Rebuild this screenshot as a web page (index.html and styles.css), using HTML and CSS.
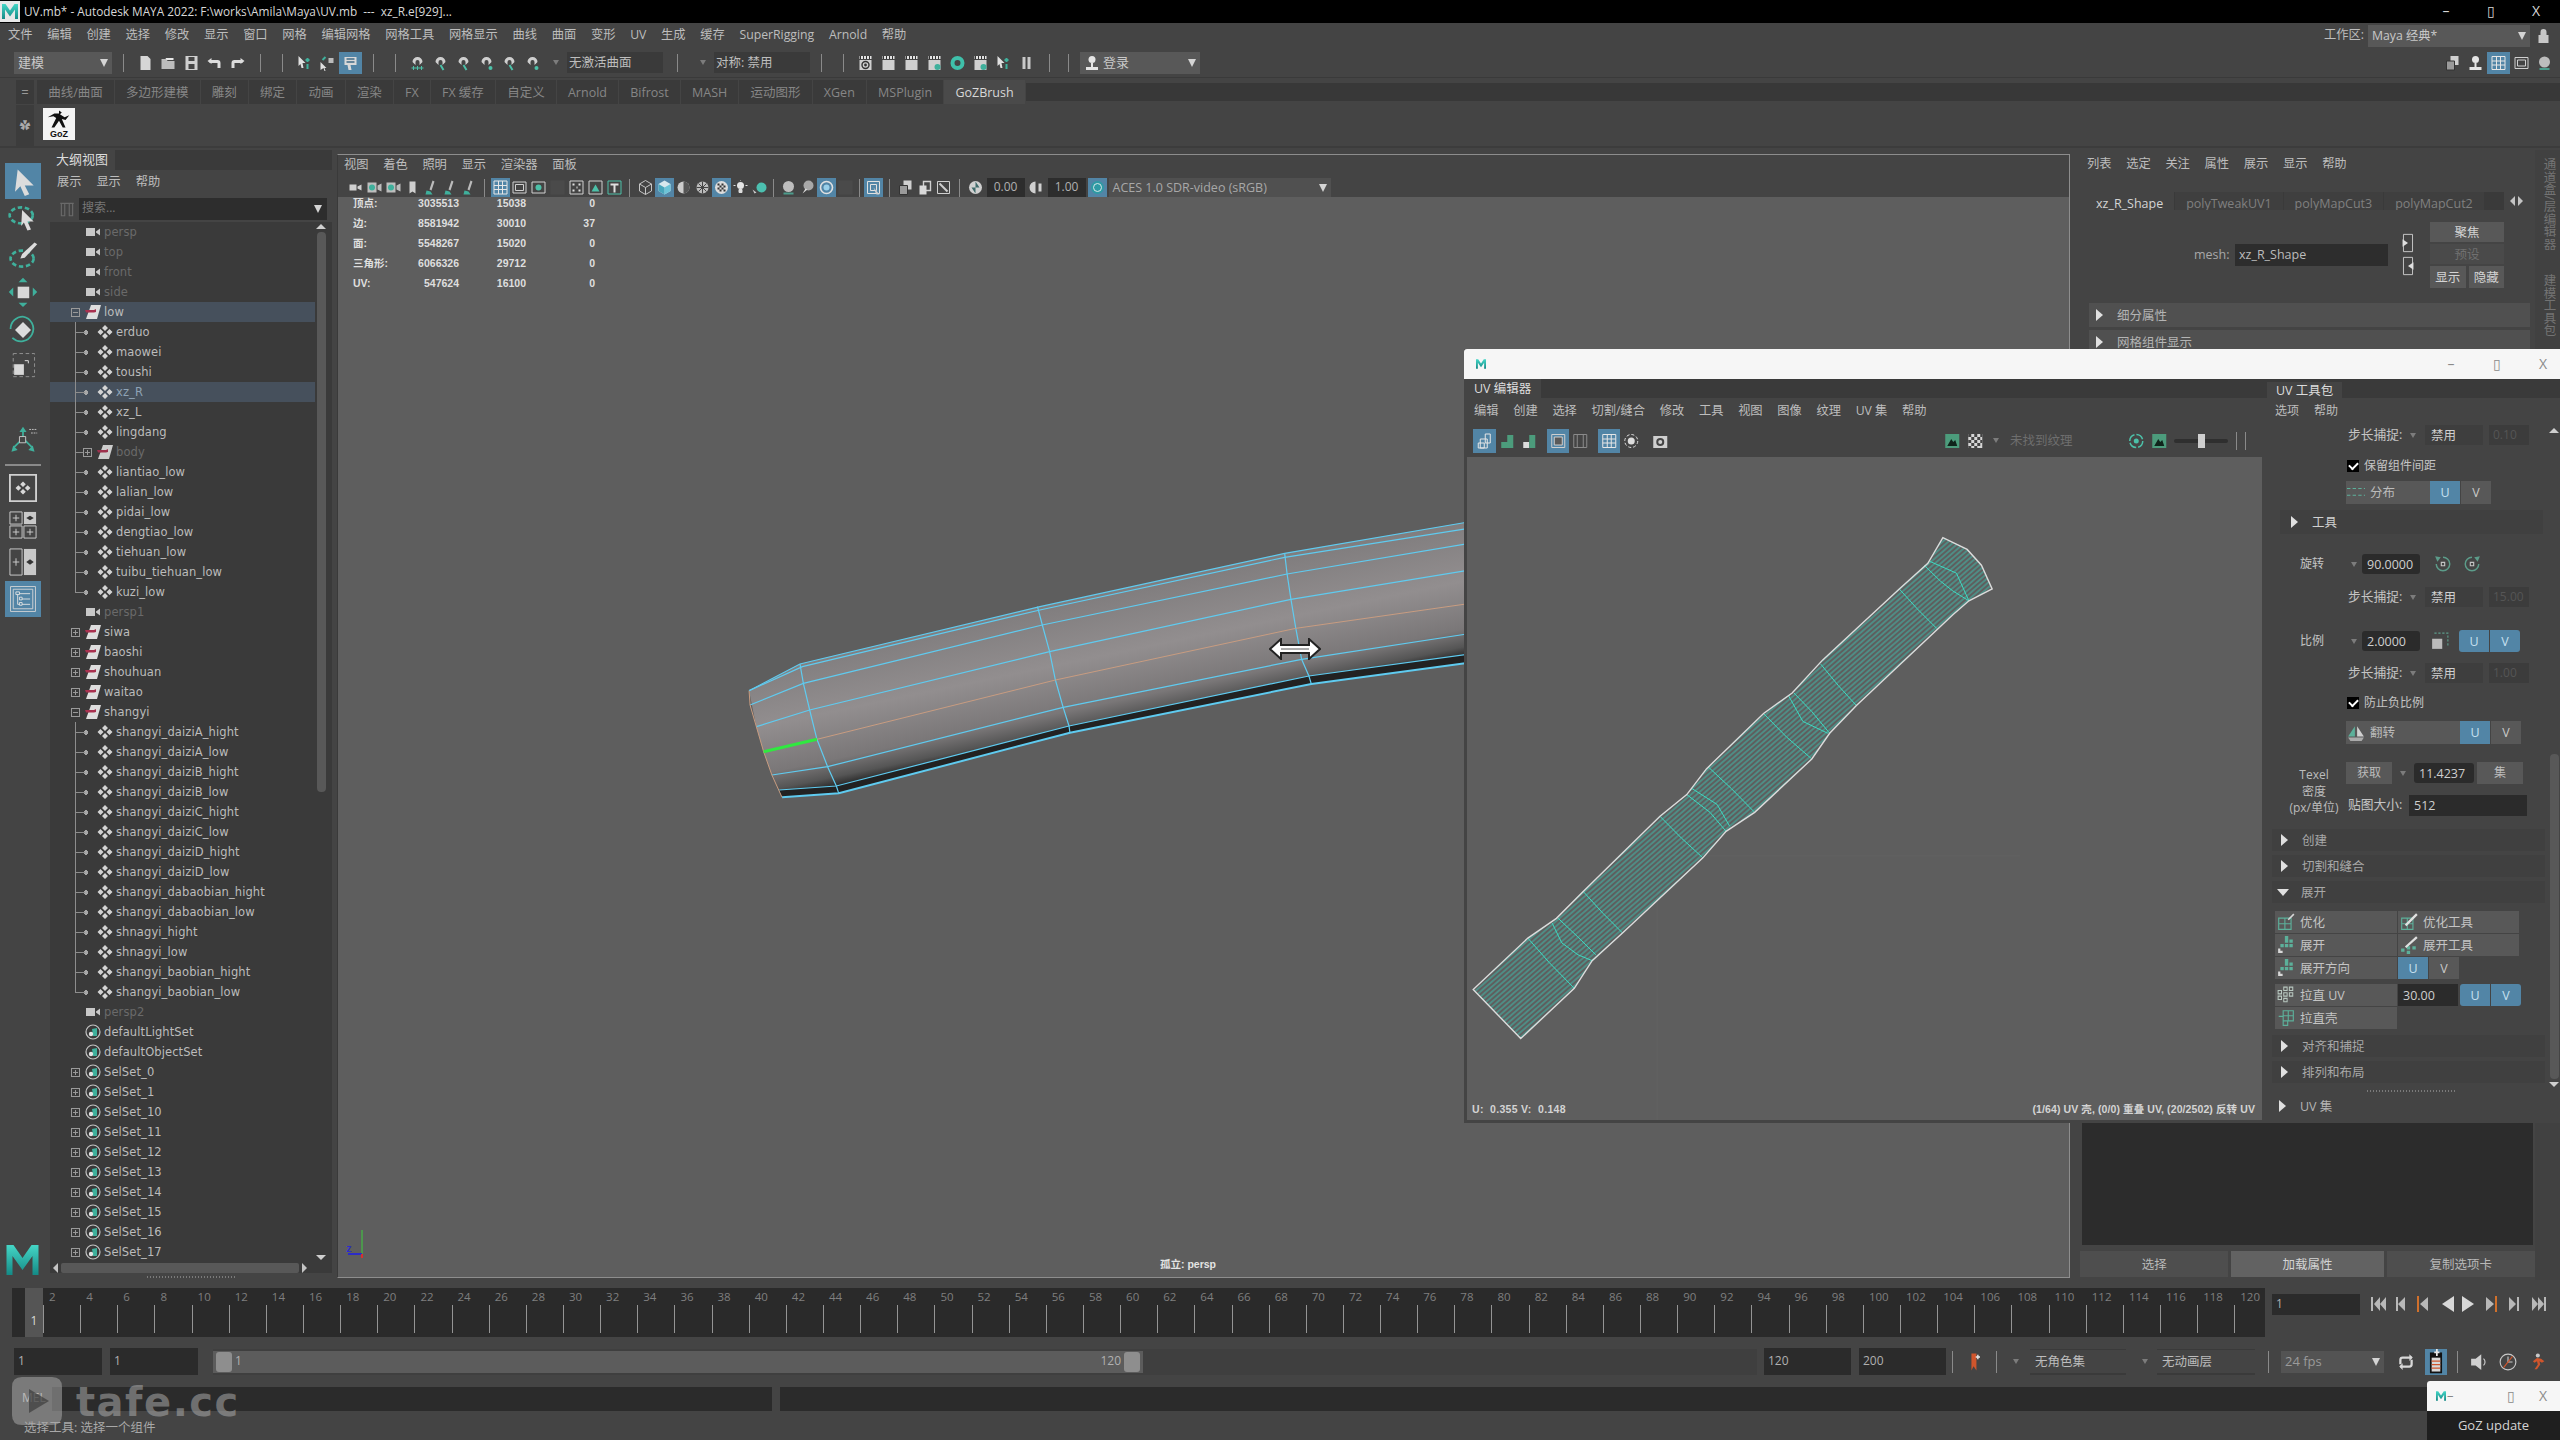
FILE: index.html
```html
<!DOCTYPE html>
<html lang="zh">
<head>
<meta charset="utf-8">
<title>Maya UV</title>
<link rel="stylesheet" href="styles.css">
</head>
<body>
<svg class="sprite" aria-hidden="true"><defs>
<linearGradient id="mg" x1="0" y1="0" x2="0" y2="1"><stop offset="0" stop-color="#45d6c6"/><stop offset="1" stop-color="#148a86"/></linearGradient>
<symbol id="mlogo" viewBox="0 0 32 30"><path d="M0 0h7l9 13 9-13h7v30h-6V11l-10 14L6 11v19H0z" fill="url(#mg)"/></symbol>
<symbol id="cam" viewBox="0 0 16 16"><path d="M1 4h9v8H1zM11 7.5l4-3v7l-4-3z" fill="#d8d8d8"/></symbol>
<symbol id="grp" viewBox="0 0 16 16"><path d="M6 1h10l-4 14H1z" fill="#dedede"/><path d="M0 6h9l2-1v3l-2 0.5H1z" fill="#a8304f"/></symbol>
<symbol id="mesh" viewBox="0 0 16 16"><path d="M8 1l3 3-3 3-3-3zM3.5 5l3 3-3 3-3-3zM12.500 5l3 3-3 3-3-3zM8 9l3 3-3 3-3-3z" fill="#d4d4d4"/></symbol>
<symbol id="set" viewBox="0 0 16 16"><circle cx="8" cy="8" r="7" fill="none" stroke="#c4c4c4" stroke-width="1.2"/><path d="M7 5l5-1v8H8z" fill="#3fb09c"/><circle cx="6" cy="10" r="2.200" fill="#e4e4e4"/></symbol>
<symbol id="plus" viewBox="0 0 9 9"><rect x=".5" y=".5" width="8" height="8" fill="none" stroke="#9a9a9a"/><path d="M2 4.500h5M4.500 2v5" stroke="#9a9a9a"/></symbol>
<symbol id="minus" viewBox="0 0 9 9"><rect x=".5" y=".5" width="8" height="8" fill="none" stroke="#9a9a9a"/><path d="M2 4.500h5" stroke="#9a9a9a"/></symbol>
<symbol id="new" viewBox="0 0 16 16"><path d="M3 1h7l3 3v11H3z" fill="#d6d6d6"/></symbol>
<symbol id="open" viewBox="0 0 16 16"><path d="M1 4h5l1 2h7v8H1z" fill="#bdbdbd"/><path d="M5 3l8 0 0 2H6z" fill="#e8e8e8"/></symbol>
<symbol id="save" viewBox="0 0 16 16"><path d="M2 1h12v14H2z" fill="#cfcfcf"/><path d="M5 2h6v4H5zM5 9h6v5H5z" fill="#444"/></symbol>
<symbol id="undo" viewBox="0 0 16 16"><path d="M3 8V5h8c2 0 3 1 3 3v5h-3V8z" fill="#dcdcdc"/><path d="M1 6l4-3v6z" fill="#dcdcdc"/></symbol>
<symbol id="redo" viewBox="0 0 16 16"><path d="M13 8V5H5C3 5 2 6 2 8v5h3V8z" fill="#dcdcdc"/><path d="M15 6l-4-3v6z" fill="#dcdcdc"/></symbol>
<symbol id="arrow" viewBox="0 0 16 16"><path d="M4 1l9 9H9l2 5-2 1-2-5-3 3z" fill="#d6d6d6"/></symbol>
<symbol id="selh" viewBox="0 0 16 16"><path d="M2 1l7 7H6l1 5-2 0-1-4-2 2z" fill="#e0e0e0"/><path d="M11 3v4M9 5h4M11 9v5" stroke="#3fb09c" stroke-width="2"/></symbol>
<symbol id="selc" viewBox="0 0 16 16"><path d="M9 3h5v5H9z" fill="#bbb"/><path d="M1 7l6 6H5l1 3-1 0-1-3-3 2z" fill="#e0e0e0"/><path d="M3 5l3-3" stroke="#3fb09c" stroke-width="2"/></symbol>
<symbol id="seld" viewBox="0 0 16 16"><rect x="1" y="0" width="14" height="16" fill="none"/><path d="M2 2h12v8H8l1 5H6l-1-5H2z" fill="#d8d8d8"/><path d="M4 4h8M4 7h8" stroke="#3f6a85" stroke-width="1.400"/></symbol>
<symbol id="snapg" viewBox="0 0 16 16"><path d="M3 7a5 5 0 1 1 10 0l-3 3V7a2 2 0 1 0-4 0v3z" fill="#cfcfcf"/><path d="M4 11v4M8 11v4M12 11v4M2 13h12" stroke="#4cc0a8"/></symbol>
<symbol id="snapm" viewBox="0 0 16 16"><path d="M3 7a5 5 0 1 1 10 0l-3 3V7a2 2 0 1 0-4 0v3z" fill="#cfcfcf"/><path d="M8 10l3 5" stroke="#4cc0a8" stroke-width="2"/></symbol>
<symbol id="snapp" viewBox="0 0 16 16"><path d="M3 7a5 5 0 1 1 10 0l-3 3V7a2 2 0 1 0-4 0v3z" fill="#cfcfcf"/><circle cx="12" cy="13" r="2" fill="#4cc0a8"/></symbol>
<symbol id="clap" viewBox="0 0 16 16"><path d="M2 1h12v3H2z" fill="#e2e2e2"/><path d="M3 1v3M6 1v3M9 1v3M12 1v3" stroke="#333"/><path d="M2 5h12v10H2z" fill="#cfcfcf"/></symbol>
<symbol id="clapo" viewBox="0 0 16 16"><use href="#clap"/><circle cx="8" cy="10" r="3.500" fill="none" stroke="#333" stroke-width="1.400"/><circle cx="8" cy="10" r="1.400" fill="#333"/></symbol>
<symbol id="clapt" viewBox="0 0 16 16"><use href="#clap"/><circle cx="11" cy="12" r="3" fill="#3fb09c"/></symbol>
<symbol id="ring" viewBox="0 0 16 16"><circle cx="8" cy="8" r="5" fill="none" stroke="#3fc0aa" stroke-width="4"/></symbol>
<symbol id="pause" viewBox="0 0 16 16"><path d="M4 2h3v12H4zM9 2h3v12H9z" fill="#c8c8c8"/></symbol>
<symbol id="person" viewBox="0 0 16 16"><circle cx="8" cy="4.500" r="3.500" fill="#e4e4e4"/><path d="M7 8h2v4h5v3H2v-3h5z" fill="#e4e4e4"/></symbol>
<symbol id="vcam" viewBox="0 0 16 16"><path d="M2 5h7v6H2zM10 7l4-2v6l-4-2z" fill="#cfcfcf"/></symbol>
<symbol id="vcam2" viewBox="0 0 16 16"><path d="M1 3h9v10H1zM11 6l4-2v8l-4-2z" fill="#bdbdbd"/><circle cx="5.500" cy="8" r="3" fill="#3fb09c"/></symbol>
<symbol id="book" viewBox="0 0 16 16"><path d="M5 2h6v12l-3-2-3 2z" fill="#cfcfcf"/></symbol>
<symbol id="tool" viewBox="0 0 16 16"><path d="M9 1l2 1-3 9-2-1z" fill="#bbb"/><path d="M3 11l4 1 2 3H2z" fill="#3fb09c"/></symbol>
<symbol id="gridb" viewBox="0 0 16 16"><path d="M1.500 1.500h13v13h-13zM1.500 6h13M1.500 10h13M6 1.500v13M10 1.500v13" fill="none" stroke="#e6e6e6"/></symbol>
<symbol id="frame" viewBox="0 0 16 16"><path d="M1.500 2.500h13v11h-13zM4 5h8v6H4z" fill="none" stroke="#d0d0d0"/></symbol>
<symbol id="fdot" viewBox="0 0 16 16"><path d="M1.500 2.500h13v11h-13z" fill="none" stroke="#d0d0d0"/><circle cx="8" cy="8" r="3" fill="#4cc0a8"/></symbol>
<symbol id="fdark" viewBox="0 0 16 16"><path d="M1 1h14v14H1z" fill="#4a4a4a"/></symbol>
<symbol id="fsafe" viewBox="0 0 16 16"><path d="M1.500 1.500h13v13h-13z" fill="none" stroke="#d0d0d0"/><path d="M4 5h2M10 5h2M4 11h2M10 11h2M8 8h1" stroke="#e0e0e0" stroke-width="2"/></symbol>
<symbol id="fmt" viewBox="0 0 16 16"><path d="M1.500 1.500h13v13h-13z" fill="none" stroke="#d0d0d0"/><path d="M4 12l4-7 4 7z" fill="#4cc0a8"/></symbol>
<symbol id="ft" viewBox="0 0 16 16"><path d="M1.500 1.500h13v13h-13z" fill="none" stroke="#4cc0a8"/><path d="M4 4h8v2H9v7H7V6H4z" fill="#e0e0e0"/></symbol>
<symbol id="cubew" viewBox="0 0 16 16"><path d="M8 1l6 3.500v7L8 15l-6-3.500v-7zM8 8l6-3.500M8 8v7M8 8L2 4.500" fill="none" stroke="#c6c6c6"/></symbol>
<symbol id="cubes" viewBox="0 0 16 16"><path d="M8 1l6 3.500v7L8 15l-6-3.500v-7z" fill="#d8e8ee"/><path d="M8 8l6-3.500v7L8 15z" fill="#6cc4d8"/><path d="M8 8v7l-6-3.500v-7z" fill="#48a6bc"/></symbol>
<symbol id="ballt" viewBox="0 0 16 16"><circle cx="8" cy="8" r="6" fill="#ccc"/><path d="M8 2a6 6 0 0 1 0 12z" fill="#555"/></symbol>
<symbol id="ballg" viewBox="0 0 16 16"><circle cx="8" cy="8" r="6" fill="#bbb"/><path d="M2 8h12M8 2v12M4 4l8 8M12 4l-8 8" stroke="#444"/></symbol>
<symbol id="ballc" viewBox="0 0 16 16"><circle cx="8" cy="8" r="6.500" fill="#ddd"/><path d="M4 4h2v2H4zM8 4h2v2H8zM6 6h2v2H6zM10 6h2v2h-2zM4 8h2v2H4zM8 8h2v2H8zM6 10h2v2H6zM10 10h2v2h-2z" fill="#333"/></symbol>
<symbol id="bulb" viewBox="0 0 16 16"><circle cx="8" cy="6" r="3.500" fill="#e4e4e4"/><path d="M6.500 10h3v3h-3zM1 6h2M13 6h2M8 0v1" fill="#ddd" stroke="#ddd"/></symbol>
<symbol id="tball" viewBox="0 0 16 16"><circle cx="10" cy="8" r="5" fill="#4cc0b0"/><path d="M1 10l4 3-2 1z" fill="#ccc"/></symbol>
<symbol id="ballw" viewBox="0 0 16 16"><circle cx="8" cy="7" r="5.500" fill="#bdbdbd"/><path d="M3 13h10v2H3z" fill="#4c9c8c"/></symbol>
<symbol id="balla" viewBox="0 0 16 16"><circle cx="9" cy="6" r="5" fill="#a8a8a8"/><path d="M3 14l3-5 2 1z" fill="#d8d8d8"/></symbol>
<symbol id="balln" viewBox="0 0 16 16"><circle cx="8" cy="8" r="6" fill="none" stroke="#e0e0e0" stroke-width="1.600"/><circle cx="8" cy="8" r="3" fill="#9ad0ea"/></symbol>
<symbol id="lock2" viewBox="0 0 16 16"><path d="M2 2h12v12H2z" fill="none" stroke="#e0e0e0"/><path d="M5 5h6v6H5z" fill="none" stroke="#e0e0e0"/><path d="M8 8l6 7-3 0-1-2z" fill="#d0d0d0"/></symbol>
<symbol id="copy" viewBox="0 0 16 16"><path d="M6 1h8v9H6z" fill="#d0d0d0"/><path d="M2 6h8v9H2z" fill="#9a9a9a" stroke="#333"/></symbol>
<symbol id="copy2" viewBox="0 0 16 16"><path d="M7 2h7v9H7z" fill="none" stroke="#d0d0d0" stroke-width="1.400"/><path d="M3 6h7v9H3z" fill="#d8d8d8"/></symbol>
<symbol id="edit" viewBox="0 0 16 16"><path d="M2 2h12v12H2z" fill="none" stroke="#cfcfcf"/><path d="M4 4l8 8" stroke="#cfcfcf" stroke-width="2"/></symbol>
<symbol id="exp" viewBox="0 0 16 16"><circle cx="8" cy="8" r="6.500" fill="#d0d0d0"/><path d="M8 2l4 6H8zM8 14L4 8h4z" fill="#3f6a6a"/></symbol>
<symbol id="gam" viewBox="0 0 16 16"><path d="M7 2a6 6 0 0 0 0 12zM10 4h3v8h-3z" fill="#d0d0d0"/></symbol>
<symbol id="cm" viewBox="0 0 16 16"><circle cx="8" cy="8" r="6.500" fill="#2f9aa4"/><circle cx="8" cy="8" r="4" fill="none" stroke="#d6e8e8"/></symbol>
<symbol id="uvicon" viewBox="0 0 16 16"><path d="M4 6h7v9H4zM9 1h5v9H9zM2 10h6v5H2z" fill="none" stroke="#e6e6e6"/></symbol>
<symbol id="uvg" viewBox="0 0 16 16"><path d="M2 9h6v6H2zM8 2h6v13H8z" fill="#4c9c7c"/></symbol>
<symbol id="uvm" viewBox="0 0 16 16"><path d="M2 9h6v6H2z" fill="#dcdcdc"/><path d="M8 2h6v13H8z" fill="#4c9c7c"/></symbol>
<symbol id="fr1" viewBox="0 0 16 16"><path d="M1.500 1.500h13v13h-13z" fill="none" stroke="#cfcfcf"/><path d="M4 4h8v8H4z" fill="#5a5a5a" stroke="#cfcfcf"/></symbol>
<symbol id="fr2" viewBox="0 0 16 16"><path d="M1.500 1.500h13v13h-13zM5 1.500v13M11 1.500v13" fill="none" stroke="#8a8a8a"/></symbol>
<symbol id="dash" viewBox="0 0 16 16"><circle cx="8" cy="8" r="6.500" fill="none" stroke="#ddd" stroke-dasharray="3 2"/><circle cx="8" cy="8" r="3.500" fill="#ddd"/></symbol>
<symbol id="snap" viewBox="0 0 16 16"><path d="M1 3h14v12H1z" fill="#cfcfcf"/><circle cx="8" cy="9" r="4" fill="#444"/><circle cx="8" cy="9" r="2" fill="#cfcfcf"/></symbol>
<symbol id="mtn" viewBox="0 0 16 16"><path d="M1 1h14v14H1z" fill="#4c9c7c"/><path d="M3 13l4-7 2 3 2-2 2 6z" fill="#10251c"/></symbol>
<symbol id="chk" viewBox="0 0 16 16"><path d="M1 1h14v14H1z" fill="#d6d6d6"/><path d="M1 1h3v3H1zM7 1h3v3H7zM13 1h2v3h-2zM4 4h3v3H4zM10 4h3v3h-3zM1 7h3v3H1zM7 7h3v3H7zM13 7h2v3h-2zM4 10h3v3H4zM10 10h3v3h-3zM1 13h3v2H1zM7 13h3v2H7z" fill="#444"/></symbol>
<symbol id="rgb" viewBox="0 0 16 16"><circle cx="8" cy="8" r="6.500" fill="none" stroke="#4cc0a8" stroke-dasharray="8 2" stroke-width="1.500"/><circle cx="8" cy="8" r="2.500" fill="#4cc0a8"/></symbol>
<symbol id="rotl" viewBox="0 0 16 16"><path d="M8 2a6 6 0 1 1-6 6" fill="none" stroke="#5c9c8a" stroke-width="1.300"/><path d="M1 1l5 1-3 4z" fill="#5c9c8a"/><path d="M6.500 6.500h3v3h-3z" fill="none" stroke="#c4c4c4"/></symbol>
<symbol id="rotr" viewBox="0 0 16 16"><path d="M8 2a6 6 0 1 0 6 6" fill="none" stroke="#5c9c8a" stroke-width="1.300"/><path d="M15 1l-5 1 3 4z" fill="#5c9c8a"/><path d="M6.500 6.500h3v3h-3z" fill="none" stroke="#c4c4c4"/></symbol>
<symbol id="scl" viewBox="0 0 16 16"><path d="M1 6h9v9H1z" fill="#bbb"/><path d="M3 1h12v11" fill="none" stroke="#5c9c8a" stroke-dasharray="2 1.500"/></symbol>
<symbol id="dist" viewBox="0 0 16 16"><path d="M0 4h16M0 10h16" stroke="#5cb09a" stroke-dasharray="3 2"/></symbol>
<symbol id="boat" viewBox="0 0 16 16"><path d="M1 11l6-9v9z" fill="#5cb09a"/><path d="M9 11V2l6 9z" fill="#d0d0d0"/><path d="M1 12h14l-2 3H3z" fill="#aaa"/></symbol>
<symbol id="opt" viewBox="0 0 16 16"><path d="M1.500 4.500h11v10h-11zM1.500 9.500h11M7 4.500v10" fill="none" stroke="#5cb09a"/><path d="M10 6l5-5" stroke="#d8d8d8" stroke-width="1.400"/></symbol>
<symbol id="optt" viewBox="0 0 16 16"><path d="M1.500 4.500h10v10h-10zM1.500 9.500h10M6.500 4.500v10" fill="none" stroke="#5cb09a"/><path d="M5 11l10-10" stroke="#e0e0e0" stroke-width="2"/></symbol>
<symbol id="unf" viewBox="0 0 16 16"><path d="M7 3h3v3H7zM11 3h3v3h-3zM3 7h3v3H3zM7 7h3v3H7zM11 7h3v3h-3zM7 0h3v3H7z" fill="#5cb09a"/><path d="M1 11h2v2H1zM3 13h2v2H3zM3 11h2v0zM1 13h2v2H1z" fill="#d8d8d8"/></symbol>
<symbol id="unft" viewBox="0 0 16 16"><path d="M1 11h3v3H1zM6 9h3v3H6zM11 9h3v3h-3zM6 13h3v3H6z" fill="#5cb09a"/><path d="M5 10l10-9" stroke="#e0e0e0" stroke-width="2"/></symbol>
<symbol id="strt" viewBox="0 0 16 16"><path d="M1 4h3v3H1zM6 1h3v3H6zM11 1h3v3h-3zM6 6h3v3H6zM11 6h3v3h-3zM1 9h3v3H1zM6 11h3v3H6z" fill="none" stroke="#b8c8c0" stroke-width=".9"/></symbol>
<symbol id="shell" viewBox="0 0 16 16"><path d="M5.500 1.500h9v9h-9zM10 1.500v9M5.500 6h9M1.500 6.500h4v8h4v-4" fill="none" stroke="#5cb09a"/></symbol>
</defs></svg>

<div class="app">
  <header class="titlebar">
    <svg class="title-logo"><use href="#mlogo"/></svg>
    <span class="title-text">UV.mb* - Autodesk MAYA 2022: F:\works\Amila\Maya\UV.mb &nbsp;--- &nbsp;xz_R.e[929]...</span>
    <span class="spacer"></span>
    <span class="winctl"><span>–</span><span>▯</span><span>X</span></span>
  </header>

  <nav class="menubar">
    <span>文件</span><span>编辑</span><span>创建</span><span>选择</span><span>修改</span><span>显示</span><span>窗口</span><span>网格</span><span>编辑网格</span><span>网格工具</span><span>网格显示</span><span>曲线</span><span>曲面</span><span>变形</span><span>UV</span><span>生成</span><span>缓存</span><span>SuperRigging</span><span>Arnold</span><span>帮助</span>
    <span class="spacer"></span>
    <span class="ws-label">工作区:</span>
    <span class="dd ws-dd">Maya 经典*<i class="caret"></i></span>
    <svg class="c lock" viewBox="0 0 16 16"><path d="M5 7V4a3 3 0 0 1 6 0v3h2v8H3V7z" fill="#c8c8c8"/></svg>
  </nav>

  <div class="toolbar">
    <span class="dd mode-dd">建模<i class="caret"></i></span>
    <i class="sep"></i>
    <svg class="c"><use href="#new"/></svg><svg class="c"><use href="#open"/></svg><svg class="c"><use href="#save"/></svg><svg class="c"><use href="#undo"/></svg><svg class="c"><use href="#redo"/></svg>
    <i class="sep"></i><i class="sep"></i>
    <svg class="c"><use href="#selh"/></svg><svg class="c"><use href="#selc"/></svg><svg class="c on"><use href="#seld"/></svg>
    <i class="sep"></i><i class="sep"></i>
    <svg class="c"><use href="#snapg"/></svg><svg class="c"><use href="#snapm"/></svg><svg class="c"><use href="#snapm"/></svg><svg class="c"><use href="#snapp"/></svg><svg class="c"><use href="#snapm"/></svg><svg class="c"><use href="#snapp"/></svg>
    <i class="caret dim cw"></i>
    <span class="tfield w95">无激活曲面</span>
    <i class="sep w28"></i><i class="caret dim cw"></i>
    <span class="tfield w95">对称: 禁用</span>
    <i class="sep"></i><i class="sep"></i>
    <svg class="c"><use href="#clapo"/></svg><svg class="c"><use href="#clap"/></svg><svg class="c"><use href="#clap"/></svg><svg class="c"><use href="#clapt"/></svg><svg class="c"><use href="#ring"/></svg><svg class="c"><use href="#clapt"/></svg><svg class="c"><use href="#selh"/></svg><svg class="c"><use href="#pause"/></svg>
    <i class="sep"></i><i class="sep w17"></i>
    <span class="dd login-dd"><svg class="c tiny"><use href="#person"/></svg>登录<i class="caret"></i></span>
    <span class="spacer"></span>
    <svg class="c"><use href="#copy"/></svg><svg class="c"><use href="#person"/></svg><svg class="c on"><use href="#gridb"/></svg><svg class="c"><use href="#frame"/></svg><svg class="c"><use href="#ballw"/></svg>
  </div>

  <div class="shelftabs">
    <span class="shelf-grip">=</span>
    <span class="st">曲线/曲面</span><span class="st">多边形建模</span><span class="st">雕刻</span><span class="st">绑定</span><span class="st">动画</span><span class="st">渲染</span><span class="st">FX</span><span class="st">FX 缓存</span><span class="st">自定义</span><span class="st">Arnold</span><span class="st">Bifrost</span><span class="st">MASH</span><span class="st">运动图形</span><span class="st">XGen</span><span class="st">MSPlugin</span><span class="st active">GoZBrush</span>
    <span class="st-rest"></span>
  </div>
  <div class="shelf">
    <span class="shelf-gear">✿</span>
    <span class="goz"><svg class="goz-man" viewBox="0 0 30 20"><path d="M15 1l3 2-2 2 5 3 5-2-4 5-4-1 4 9h-3l-4-7-5 7H7l5-10-3-2-6 1 7-4 5 0z" fill="#111"/></svg><b>GoZ</b></span>
  </div>

  <main class="main">
    <aside class="toolbox">
      <svg class="tb on" viewBox="0 0 36 36"><path d="M12 5l18 18H20l5 10-5 2-5-11-6 6z" fill="#dcdcdc"/></svg>
      <svg class="tb" viewBox="0 0 36 36"><ellipse cx="16" cy="15" rx="13" ry="9" fill="none" stroke="#3fb09c" stroke-width="3" stroke-dasharray="5 3"/><path d="M17 9l13 13h-7l4 9-4 1-4-9-3 4z" fill="#dcdcdc"/></svg>
      <svg class="tb" viewBox="0 0 36 36"><ellipse cx="17" cy="22" rx="13" ry="9" fill="none" stroke="#3fb09c" stroke-width="3" stroke-dasharray="5 3"/><path d="M31 4l3 2-14 15-5 1 2-5z" fill="#dcdcdc"/></svg>
      <svg class="tb" viewBox="0 0 36 36"><path d="M12 12h13v13H12z" fill="#d8d8d8"/><path d="M18 2l5 5H13zM18 35l-5-5h10zM2 18l5-5v10zM34 18l-5 5V13z" fill="#3fb09c"/></svg>
      <svg class="tb" viewBox="0 0 36 36"><path d="M18 4A14 14 0 1 1 6 28" fill="none" stroke="#3fb09c" stroke-width="2"/><path d="M4 18A14 14 0 0 1 18 4" fill="none" stroke="#3fb09c" stroke-width="2"/><path d="M18 10l9 9-9 9-9-9z" fill="#dcdcdc"/></svg>
      <svg class="tb" viewBox="0 0 36 36"><path d="M8 16h11v12H8z" fill="#d8d8d8"/><path d="M7 4h24v26H7z" fill="none" stroke="#9a9a9a" stroke-dasharray="4 3"/><path d="M20 12h4v3" fill="none" stroke="#eee"/></svg>
      <svg class="tb gap-t" viewBox="0 0 36 36"><path d="M18 15V4M18 15l-10 10M18 15l10 10" stroke="#3fb09c" stroke-width="2"/><path d="M18 2l4 6h-8zM5 30l2-7 5 5zM31 30l-7-2 5-5z" fill="#3fb09c"/><path d="M14 13h7v7h-7z" fill="#444" stroke="#d0d0d0"/><path d="M25 5h9M27 9h7" stroke="#ccc" stroke-dasharray="2 1"/></svg>
      <i class="tb-rule"></i>
      <svg class="ly" viewBox="0 0 30 30"><path d="M1 1h28v28H1z" fill="#444" stroke="#d0d0d0" stroke-width="2"/><path d="M15 8l3 3-3 3-3-3zM10 12l3 3-3 3-3-3zM20 12l3 3-3 3-3-3zM15 16l3 3-3 3-3-3z" fill="#d8d8d8"/></svg>
      <svg class="ly" viewBox="0 0 30 30"><path d="M1 1h13v13H1zM16 16h13v13H16zM1 16h13v13H1z" fill="none" stroke="#d0d0d0"/><path d="M4 7.500h7M7.500 4v7M4 22.500h7M7.500 19v7M19 22.500h7M22.500 19v7" stroke="#d0d0d0"/><path d="M16 1h13v13H16z" fill="#c8c8c8"/><path d="M22.500 5l4 2.500-4 2.500-4-2.500z" fill="#333"/></svg>
      <svg class="ly" viewBox="0 0 30 30"><path d="M1 1h13v28H1z" fill="none" stroke="#d0d0d0"/><path d="M4 15h7M7.500 11v8" stroke="#d0d0d0"/><path d="M16 1h13v28H16z" fill="#c8c8c8"/><path d="M22.500 12l4 3-4 3-4-3z" fill="#333"/></svg>
      <svg class="tb on tbo" viewBox="0 0 36 36"><path d="M4 4h28v28H4z" fill="none" stroke="#d8d8d8"/><path d="M7 7h22v22H7z" fill="none" stroke="#d8d8d8"/><path d="M10 10h4v3h-4zM14 12h12M14 16h3v3h-3zM17 18h9M14 22h3v3h-3zM17 24h9M12 13v11h2" fill="none" stroke="#e4e4e4"/></svg>
      <span class="spacer"></span>
      <svg class="bigm"><use href="#mlogo"/></svg>
    </aside>

    <section class="outliner">
      <div class="tabstrip"><span class="tab">大纲视图</span></div>
      <div class="pmenu omenu"><span>展示</span><span>显示</span><span>帮助</span></div>
      <div class="osearch"><svg class="osearch-ic" viewBox="0 0 16 16"><path d="M2 3h12M3 3v11h3V3M10 3v11h3V3" fill="none" stroke="#6a6a6a"/></svg><span class="osearch-in">搜索...<i class="caret"></i></span></div>
      <div class="olist">
        <div class="orows">
          <div class="r r0 off"><svg class="ic"><use href="#cam"/></svg>persp</div>
          <div class="r r0 off"><svg class="ic"><use href="#cam"/></svg>top</div>
          <div class="r r0 off"><svg class="ic"><use href="#cam"/></svg>front</div>
          <div class="r r0 off"><svg class="ic"><use href="#cam"/></svg>side</div>
          <div class="r rx sel"><svg class="ex"><use href="#minus"/></svg><svg class="ic"><use href="#grp"/></svg>low</div>
          <div class="r rc"><svg class="ic"><use href="#mesh"/></svg>erduo</div>
          <div class="r rc"><svg class="ic"><use href="#mesh"/></svg>maowei</div>
          <div class="r rc"><svg class="ic"><use href="#mesh"/></svg>toushi</div>
          <div class="r rc sel hl"><svg class="ic"><use href="#mesh"/></svg>xz_R</div>
          <div class="r rc"><svg class="ic"><use href="#mesh"/></svg>xz_L</div>
          <div class="r rc"><svg class="ic"><use href="#mesh"/></svg>lingdang</div>
          <div class="r rcx off"><svg class="ex"><use href="#plus"/></svg><svg class="ic"><use href="#grp"/></svg>body</div>
          <div class="r rc"><svg class="ic"><use href="#mesh"/></svg>liantiao_low</div>
          <div class="r rc"><svg class="ic"><use href="#mesh"/></svg>lalian_low</div>
          <div class="r rc"><svg class="ic"><use href="#mesh"/></svg>pidai_low</div>
          <div class="r rc"><svg class="ic"><use href="#mesh"/></svg>dengtiao_low</div>
          <div class="r rc"><svg class="ic"><use href="#mesh"/></svg>tiehuan_low</div>
          <div class="r rc"><svg class="ic"><use href="#mesh"/></svg>tuibu_tiehuan_low</div>
          <div class="r rc last"><svg class="ic"><use href="#mesh"/></svg>kuzi_low</div>
          <div class="r r0 off"><svg class="ic"><use href="#cam"/></svg>persp1</div>
          <div class="r rx"><svg class="ex"><use href="#plus"/></svg><svg class="ic"><use href="#grp"/></svg>siwa</div>
          <div class="r rx"><svg class="ex"><use href="#plus"/></svg><svg class="ic"><use href="#grp"/></svg>baoshi</div>
          <div class="r rx"><svg class="ex"><use href="#plus"/></svg><svg class="ic"><use href="#grp"/></svg>shouhuan</div>
          <div class="r rx"><svg class="ex"><use href="#plus"/></svg><svg class="ic"><use href="#grp"/></svg>waitao</div>
          <div class="r rx"><svg class="ex"><use href="#minus"/></svg><svg class="ic"><use href="#grp"/></svg>shangyi</div>
          <div class="r rc"><svg class="ic"><use href="#mesh"/></svg>shangyi_daiziA_hight</div>
          <div class="r rc"><svg class="ic"><use href="#mesh"/></svg>shangyi_daiziA_low</div>
          <div class="r rc"><svg class="ic"><use href="#mesh"/></svg>shangyi_daiziB_hight</div>
          <div class="r rc"><svg class="ic"><use href="#mesh"/></svg>shangyi_daiziB_low</div>
          <div class="r rc"><svg class="ic"><use href="#mesh"/></svg>shangyi_daiziC_hight</div>
          <div class="r rc"><svg class="ic"><use href="#mesh"/></svg>shangyi_daiziC_low</div>
          <div class="r rc"><svg class="ic"><use href="#mesh"/></svg>shangyi_daiziD_hight</div>
          <div class="r rc"><svg class="ic"><use href="#mesh"/></svg>shangyi_daiziD_low</div>
          <div class="r rc"><svg class="ic"><use href="#mesh"/></svg>shangyi_dabaobian_hight</div>
          <div class="r rc"><svg class="ic"><use href="#mesh"/></svg>shangyi_dabaobian_low</div>
          <div class="r rc"><svg class="ic"><use href="#mesh"/></svg>shnagyi_hight</div>
          <div class="r rc"><svg class="ic"><use href="#mesh"/></svg>shnagyi_low</div>
          <div class="r rc"><svg class="ic"><use href="#mesh"/></svg>shangyi_baobian_hight</div>
          <div class="r rc last"><svg class="ic"><use href="#mesh"/></svg>shangyi_baobian_low</div>
          <div class="r r0 off"><svg class="ic"><use href="#cam"/></svg>persp2</div>
          <div class="r r0"><svg class="ic"><use href="#set"/></svg>defaultLightSet</div>
          <div class="r r0"><svg class="ic"><use href="#set"/></svg>defaultObjectSet</div>
          <div class="r rx"><svg class="ex"><use href="#plus"/></svg><svg class="ic"><use href="#set"/></svg>SelSet_0</div>
          <div class="r rx"><svg class="ex"><use href="#plus"/></svg><svg class="ic"><use href="#set"/></svg>SelSet_1</div>
          <div class="r rx"><svg class="ex"><use href="#plus"/></svg><svg class="ic"><use href="#set"/></svg>SelSet_10</div>
          <div class="r rx"><svg class="ex"><use href="#plus"/></svg><svg class="ic"><use href="#set"/></svg>SelSet_11</div>
          <div class="r rx"><svg class="ex"><use href="#plus"/></svg><svg class="ic"><use href="#set"/></svg>SelSet_12</div>
          <div class="r rx"><svg class="ex"><use href="#plus"/></svg><svg class="ic"><use href="#set"/></svg>SelSet_13</div>
          <div class="r rx"><svg class="ex"><use href="#plus"/></svg><svg class="ic"><use href="#set"/></svg>SelSet_14</div>
          <div class="r rx"><svg class="ex"><use href="#plus"/></svg><svg class="ic"><use href="#set"/></svg>SelSet_15</div>
          <div class="r rx"><svg class="ex"><use href="#plus"/></svg><svg class="ic"><use href="#set"/></svg>SelSet_16</div>
          <div class="r rx"><svg class="ex"><use href="#plus"/></svg><svg class="ic"><use href="#set"/></svg>SelSet_17</div>
        </div>
        <div class="vscroll"><i class="ar-up"></i><i class="vthumb"></i><span class="spacer"></span><i class="ar-dn"></i></div>
      </div>
      <div class="hscroll"><i class="ar-l"></i><i class="hthumb"></i><i class="ar-r"></i></div>
      <div class="dots-row"><i class="dots"></i></div>
    </section>

    <section class="viewport">
      <div class="pmenu vmenu"><span>视图</span><span>着色</span><span>照明</span><span>显示</span><span>渲染器</span><span>面板</span></div>
      <div class="vtools">
        <svg class="v"><use href="#vcam"/></svg><svg class="v"><use href="#vcam2"/></svg><svg class="v"><use href="#vcam2"/></svg><svg class="v"><use href="#book"/></svg><svg class="v"><use href="#tool"/></svg><svg class="v"><use href="#tool"/></svg><svg class="v"><use href="#tool"/></svg>
        <i class="vsep"></i>
        <svg class="v on"><use href="#gridb"/></svg><svg class="v"><use href="#frame"/></svg><svg class="v"><use href="#fdot"/></svg><svg class="v"><use href="#fdark"/></svg><svg class="v"><use href="#fsafe"/></svg><svg class="v"><use href="#fmt"/></svg><svg class="v"><use href="#ft"/></svg>
        <i class="vsep"></i>
        <svg class="v"><use href="#cubew"/></svg><svg class="v on"><use href="#cubes"/></svg><svg class="v"><use href="#ballt"/></svg><svg class="v"><use href="#ballg"/></svg><svg class="v on"><use href="#ballc"/></svg><svg class="v"><use href="#bulb"/></svg><svg class="v"><use href="#tball"/></svg>
        <i class="vsep s10"></i>
        <svg class="v"><use href="#ballw"/></svg><svg class="v"><use href="#balla"/></svg><svg class="v on"><use href="#balln"/></svg><svg class="v"><use href="#fdark"/></svg>
        <i class="vsep s9"></i>
        <svg class="v on"><use href="#lock2"/></svg>
        <i class="vsep s13"></i>
        <svg class="v"><use href="#copy"/></svg><svg class="v"><use href="#copy2"/></svg><svg class="v"><use href="#edit"/></svg>
        <i class="vsep s13"></i>
        <svg class="v"><use href="#exp"/></svg><span class="vf">0.00</span><svg class="v"><use href="#gam"/></svg><span class="vf">1.00</span><svg class="v on"><use href="#cm"/></svg>
        <span class="dd aces-dd">ACES 1.0 SDR-video (sRGB)<i class="caret"></i></span>
      </div>
      <div class="view3d">
        <div class="stats">
          <span class="sl">顶点:</span><span>3035513</span><span>15038</span><span>0</span>
          <span class="sl">边:</span><span>8581942</span><span>30010</span><span>37</span>
          <span class="sl">面:</span><span>5548267</span><span>15020</span><span>0</span>
          <span class="sl">三角形:</span><span>6066326</span><span>29712</span><span>0</span>
          <span class="sl">UV:</span><span>547624</span><span>16100</span><span>0</span>
        </div>
        <svg class="tube" viewBox="0 0 1568 960" preserveAspectRatio="none">
          <defs><linearGradient id="tg" gradientUnits="userSpaceOnUse" x1="0" y1="520" x2="113" y2="896"><stop offset="0" stop-color="#807d7e"/><stop offset=".45" stop-color="#928e8f"/><stop offset=".8" stop-color="#7a7778"/><stop offset=".93" stop-color="#555"/><stop offset="1" stop-color="#2a2a2a"/></linearGradient></defs>
          <polygon fill="url(#tg)" points="60,572 165,492 660,320 1165,160 1568,60 1568,484 1220,552 722,698 245,880 128,892 107,825 90,755 75,680"/>
          <polygon fill="#222" points="122,870 240,858 720,678 1215,528 1568,458 1568,484 1220,552 722,698 245,880 128,892"/>
          <g class="wire">
            <polyline points="60,572 165,492 660,320 1165,160 1568,60"/>
            <polyline points="60,572 170,500 660,330 1165,172 1568,80"/>
            <polyline points="62,615 172,550 665,375 1170,222 1568,125"/>
            <polyline points="75,680 185,630 680,455 1178,298 1568,205"/>
            <polyline points="107,825 222,800 708,622 1200,478 1568,396"/>
            <polyline points="122,870 240,858 720,678 1215,528 1568,458"/>
            <polyline class="thick" points="128,892 245,880 722,698 1220,552 1568,484"/>
            <polyline points="165,492 172,550 185,630 200,718 222,800 240,858 245,880"/>
            <polyline points="655,320 665,375 680,455 692,540 708,622 720,678 722,698"/>
            <polyline points="1165,160 1170,222 1178,298 1188,385 1200,478 1215,528 1220,552"/>
          </g>
          <g class="wire-o">
            <polyline points="200,718 692,540 1188,385 1568,306"/>
            <polyline points="60,572 62,615 75,680 90,755 107,825 128,892"/>
          </g>
          <line class="wire-g" x1="90" y1="755" x2="200" y2="718"/>
        </svg>
        <svg class="cursor" viewBox="0 0 52 22"><path d="M1 11L12 1v6h28V1l11 10-11 10v-6H12v6z" fill="#fff" stroke="#222" stroke-width="2"/><path d="M12 11h28" stroke="#555"/></svg>
        <svg class="axes" viewBox="0 0 32 36"><path d="M17 2v24" stroke="#3ccf3c"/><path d="M3 26h14" stroke="#2c2cc8" stroke-width="2"/><path d="M17 26v4" stroke="#d83030" stroke-width="2"/><text x="1" y="24" class="axt">z</text></svg>
        <div class="iso">孤立: persp</div>
      </div>
    </section>

    <section class="channel">
      <div class="pmenu cmenu"><span>列表</span><span>选定</span><span>关注</span><span>属性</span><span>展示</span><span>显示</span><span>帮助</span></div>
      <div class="ctabs">
        <div class="ctab-strip"><span class="ct active">xz_R_Shape</span><span class="ct">polyTweakUV1</span><span class="ct">polyMapCut3</span><span class="ct">polyMapCut2</span></div>
        <i class="ar-l mini"></i><i class="ar-r mini"></i>
      </div>
      <div class="meshrow">
        <span class="mesh-l">mesh:</span>
        <span class="mesh-in">xz_R_Shape</span>
        <span class="mesh-ar"><svg class="ma" viewBox="0 0 14 22"><path d="M2 1.500h10v19H2z" fill="none" stroke="#cfcfcf"/><path d="M1 7l6 4-6 4z" fill="#e0e0e0"/></svg><svg class="ma" viewBox="0 0 14 22"><path d="M2 1.500h10v19H2z" fill="none" stroke="#cfcfcf"/><path d="M13 7L7 11l6 4z" fill="#e0e0e0"/></svg></span>
        <span class="mesh-b">
          <span class="mb">聚焦</span>
          <span class="mb dimb">预设</span>
          <span class="mbs"><span class="mb">显示</span><span class="mb">隐藏</span></span>
        </span>
      </div>
      <div class="cbar"><i class="tri"></i>细分属性</div>
      <div class="cbar mt3"><i class="tri"></i>网格组件显示</div>
      <div class="cbottom"></div>
      <div class="cbtns"><span class="cb">选择</span><span class="cb act">加载属性</span><span class="cb">复制选项卡</span></div>
    </section>

    <aside class="fartabs"><span class="vt">通道盒/层编辑器</span><span class="vt">建模工具包</span></aside>
  </main>

  <div class="timerow">
    <div class="timeline">
      <span class="curf">1</span>
      <span class="fr">2</span><span class="fr">4</span><span class="fr">6</span><span class="fr">8</span><span class="fr">10</span><span class="fr">12</span><span class="fr">14</span><span class="fr">16</span><span class="fr">18</span><span class="fr">20</span><span class="fr">22</span><span class="fr">24</span><span class="fr">26</span><span class="fr">28</span><span class="fr">30</span><span class="fr">32</span><span class="fr">34</span><span class="fr">36</span><span class="fr">38</span><span class="fr">40</span><span class="fr">42</span><span class="fr">44</span><span class="fr">46</span><span class="fr">48</span><span class="fr">50</span><span class="fr">52</span><span class="fr">54</span><span class="fr">56</span><span class="fr">58</span><span class="fr">60</span><span class="fr">62</span><span class="fr">64</span><span class="fr">66</span><span class="fr">68</span><span class="fr">70</span><span class="fr">72</span><span class="fr">74</span><span class="fr">76</span><span class="fr">78</span><span class="fr">80</span><span class="fr">82</span><span class="fr">84</span><span class="fr">86</span><span class="fr">88</span><span class="fr">90</span><span class="fr">92</span><span class="fr">94</span><span class="fr">96</span><span class="fr">98</span><span class="fr">100</span><span class="fr">102</span><span class="fr">104</span><span class="fr">106</span><span class="fr">108</span><span class="fr">110</span><span class="fr">112</span><span class="fr">114</span><span class="fr">116</span><span class="fr">118</span><span class="fr">120</span>
    </div>
    <div class="play-side">
      <span class="field curbox">1</span>
      <svg class="playback" viewBox="0 0 180 20">
        <path d="M3 3h2v14H3zM12 3v14l-6-7zM18 3v14l-6-7zM28 3h2v14h-2zM37 3v14l-7-7zM50 3h1v14h-1zM60 3v14l-8-7z" fill="#b8b8b8"/>
        <path d="M49 2h2v16h-2z" fill="#d0702c"/>
        <path d="M86 2v16L74 10zM94 2v16l12-8z" fill="#d8d8d8"/>
        <path d="M118 3v14l8-7zM127 2h2v16h-2z" fill="#b8b8b8"/><path d="M127 2h2v16h-2z" fill="#d0702c"/>
        <path d="M141 3v14l7-7zM149 3h2v14h-2zM164 3v14l6-7zM170 3v14l6-7zM176 3h2v14h-2z" fill="#b8b8b8"/>
      </svg>
    </div>
  </div>

  <div class="rangerow">
    <span class="field w88">1</span>
    <span class="field w88">1</span>
    <div class="range">
      <div class="range-in"><i class="rh"></i><span>1</span><span class="spacer"></span><span>120</span><i class="rh"></i></div>
    </div>
    <span class="field w87">120</span>
    <span class="field w87">200</span>
    <div class="rright">
      <i class="rsep s6"></i>
      <svg class="rkey" viewBox="0 0 16 28"><path d="M3 2h7v24l-4-6-3 6z" fill="#d0552c"/><path d="M12 4v6M9 7h6" stroke="#e8e8e8" stroke-width="2"/></svg>
      <i class="rsep s13b"></i>
      <i class="caret dim ca1"></i><span class="rfield">无角色集</span>
      <i class="caret dim ca2"></i><span class="rfield w98">无动画层</span>
      <i class="rsep s13b"></i>
      <span class="dd fps-dd">24 fps<i class="caret"></i></span>
      <svg class="r-i loop" viewBox="0 0 16 16"><path d="M3 10V6a2 2 0 0 1 2-2h8M13 6v4a2 2 0 0 1-2 2H3" fill="none" stroke="#d8d8d8" stroke-width="2"/><path d="M11 1l3 3-3 3zM5 9l-3 3 3 3z" fill="#d8d8d8"/></svg>
      <svg class="r-on" viewBox="0 4 22 30"><path d="M4 8h14v24H4z" fill="#111"/><path d="M6 14h10v16H6z" fill="#d8d8d8"/><path d="M6 18h10M6 22h10M6 26h10" stroke="#d0552c" stroke-width="1.500"/><path d="M12 4v8M9 8h6" stroke="#e8e8e8" stroke-width="2"/></svg>
      <i class="rsep s10b"></i>
      <svg class="r-i snd" viewBox="0 0 16 16"><path d="M1 5h4l5-4v14l-5-4H1z" fill="#d0d0d0"/><path d="M12 5a4 4 0 0 1 0 6" fill="none" stroke="#d0d0d0"/></svg>
      <svg class="r-i clk" viewBox="0 0 16 16"><circle cx="8" cy="8" r="7" fill="none" stroke="#c8c8c8"/><path d="M8 3v5h4" stroke="#c8c8c8" fill="none"/><path d="M4 13l8-10" stroke="#d0552c"/></svg>
      <svg class="r-i run" viewBox="0 0 16 22"><circle cx="9" cy="3" r="2.500" fill="#c8c8c8"/><path d="M8 6l-5 4 2 2 3-2 1 4-4 6h3l4-6-1-4 3 2 3-2-4-3z" fill="#d0552c"/></svg>
    </div>
  </div>

  <div class="cmdrow">
    <span class="mel">MEL</span>
    <span class="cmd c1"></span>
    <span class="cmd c2"></span>
  </div>
  <div class="helprow">选择工具: 选择一个组件</div>

  <div class="watermark">
    <svg class="wm-logo" viewBox="0 0 50 48"><path d="M10 0h30q10 0 10 10v28q0 10-10 10H10Q0 48 0 38V10Q0 0 10 0z" fill="#a8a8a8" fill-opacity=".55"/><path d="M17 12l20 12-20 12z" fill="#3c3c3c" fill-opacity=".7"/></svg>
    <span class="wm-text">tafe.cc</span>
  </div>

  <section class="uvwin">
    <div class="wtitle"><svg class="wlogo"><use href="#mlogo"/></svg><span class="spacer"></span><span class="wctl"><span>–</span><span>▯</span><span>X</span></span></div>
    <div class="uvbody">
      <div class="uvleft">
        <div class="tabstrip uvstrip"><span class="tab uvtab">UV 编辑器</span></div>
        <div class="pmenu uvmenu"><span>编辑</span><span>创建</span><span>选择</span><span>切割/缝合</span><span>修改</span><span>工具</span><span>视图</span><span>图像</span><span>纹理</span><span>UV 集</span><span>帮助</span></div>
        <div class="uvtools">
          <svg class="v u on"><use href="#uvicon"/></svg><svg class="v u"><use href="#uvg"/></svg><svg class="v u"><use href="#uvm"/></svg>
          <i class="ugap"></i>
          <svg class="v u on"><use href="#fr1"/></svg><svg class="v u"><use href="#fr2"/></svg>
          <i class="ugap"></i>
          <svg class="v u on"><use href="#gridb"/></svg><svg class="v u"><use href="#dash"/></svg>
          <i class="ugap"></i>
          <svg class="v u"><use href="#snap"/></svg>
          <span class="spacer"></span>
          <svg class="v u"><use href="#mtn"/></svg><svg class="v u"><use href="#chk"/></svg>
          <i class="caret dim ucar"></i>
          <span class="notex">未找到纹理</span>
          <svg class="v u"><use href="#rgb"/></svg><svg class="v u"><use href="#mtn"/></svg>
          <span class="uslider"><i></i></span>
          <i class="usep"></i><i class="usep"></i>
        </div>
        <div class="uvview">
          <svg class="shell" viewBox="0 0 1568 1568" preserveAspectRatio="none">
            <defs>
              <pattern id="hatch" patternUnits="userSpaceOnUse" width="400" height="10" patternTransform="rotate(-38)"><line x1="0" y1="5" x2="400" y2="5" stroke="#3fbcab" stroke-width="2.600"/></pattern>
              <clipPath id="shellclip"><polygon points="37,1238 190,1108 270,1058 345,990 560,800 635,745 690,680 850,540 930,488 1015,405 1230,225 1310,160 1352,95 1420,125 1460,165 1490,225 1425,255 1380,290 1110,520 1035,590 985,655 825,790 745,838 680,905 455,1095 370,1165 320,1235 170,1362"/></clipPath>
            </defs>
            <line class="uvgrid" x1="552" y1="900" x2="552" y2="1568"/>
            <line class="uvgrid" x1="552" y1="900" x2="1568" y2="900"/>
            <g clip-path="url(#shellclip)"><rect width="1568" height="1568" fill="url(#hatch)"/></g>
            <g class="ringl">
              <polyline points="190,1108 250,1170 320,1235"/>
              <polyline points="258,1070 285,1120 330,1150 370,1165"/>
              <polyline points="275,1058 330,1105 380,1150"/>
              <polyline points="345,990 400,1045 455,1095"/>
              <polyline points="560,800 620,855 680,905"/>
              <polyline points="635,745 700,790 745,838"/>
              <polyline points="650,730 720,770 755,825"/>
              <polyline points="695,675 760,730 825,790"/>
              <polyline points="850,540 915,600 985,655"/>
              <polyline points="920,495 960,560 1030,590"/>
              <polyline points="935,488 985,535 1035,590"/>
              <polyline points="1010,415 1060,470 1110,520"/>
              <polyline points="1230,225 1280,275 1335,325"/>
              <polyline points="1300,165 1345,205 1380,230 1425,255"/>
              <polyline points="1315,155 1390,185 1425,255"/>
            </g>
            <polygon class="shell-o" points="37,1238 190,1108 270,1058 345,990 560,800 635,745 690,680 850,540 930,488 1015,405 1230,225 1310,160 1352,95 1420,125 1460,165 1490,225 1425,255 1380,290 1110,520 1035,590 985,655 825,790 745,838 680,905 455,1095 370,1165 320,1235 170,1362"/>
          </svg>
          <div class="uvstatus"><span>U:&nbsp; 0.355 V:&nbsp; 0.148</span><span class="stat-r">(1/64) UV 壳, (0/0) 重叠 UV, (20/2502) 反转 UV</span></div>
        </div>
      </div>

      <div class="tk">
        <div class="tabstrip uvstrip tkstrip"><span class="tab uvtab">UV 工具包</span></div>
        <div class="pmenu tkmenu"><span>选项</span><span>帮助</span></div>
        <div class="tkbody">
          <div class="tkscroll">
            <div class="tr snap"><span class="tl4">步长捕捉:</span><i class="caret dim tca"></i><span class="sbox">禁用</span><span class="sval">0.10</span></div>
            <div class="tr chkrow m9"><i class="cbx"></i>保留组件间距</div>
            <div class="tr grp m4"><span class="gb w85"><svg class="gi"><use href="#dist"/></svg>分布</span><span class="uvb on">U</span><span class="uvb">V</span></div>
            <div class="sect tsect m6"><i class="tri"></i>工具</div>

            <div class="tr lab m19"><span class="tlab">旋转</span><i class="caret dim lca"></i><span class="tin">90.0000</span><svg class="ri gl23"><use href="#rotl"/></svg><svg class="ri gl12"><use href="#rotr"/></svg></div>
            <div class="tr snap m11"><span class="tl4">步长捕捉:</span><i class="caret dim tca"></i><span class="sbox">禁用</span><span class="sval">15.00</span></div>
            <div class="tr lab m22"><span class="tlab">比例</span><i class="caret dim lca"></i><span class="tin">2.0000</span><svg class="ri gl12"><use href="#scl"/></svg><span class="uvb on gl10 rl">U</span><span class="uvb on rr">V</span></div>
            <div class="tr snap m10"><span class="tl4">步长捕捉:</span><i class="caret dim tca"></i><span class="sbox">禁用</span><span class="sval">1.00</span></div>
            <div class="tr chkrow m8"><i class="cbx"></i>防止负比例</div>
            <div class="tr grp m7"><span class="gb w114"><svg class="gi"><use href="#boat"/></svg>翻转</span><span class="uvb on">U</span><span class="uvb">V</span></div>

            <div class="texel">
              <div class="tex-l">Texel<br>密度<br>(px/单位)</div>
              <div class="tex-r">
                <div class="tex-row"><span class="tb-btn w46">获取</span><i class="caret dim tca2"></i><span class="tin w60">11.4237</span><span class="tb-btn w46 gl3">集</span></div>
                <div class="tex-row m10"><span class="tl4">贴图大小:</span><span class="mapin">512</span></div>
              </div>
            </div>

            <div class="sect m13"><i class="tri"></i>创建</div>
            <div class="sect m4"><i class="tri"></i>切割和缝合</div>
            <div class="sect m4"><i class="tri d"></i>展开</div>

            <div class="bgrid">
              <span class="bb"><svg class="gi"><use href="#opt"/></svg>优化</span><span class="bb"><svg class="gi"><use href="#optt"/></svg>优化工具</span>
              <span class="bb"><svg class="gi"><use href="#unf"/></svg>展开</span><span class="bb"><svg class="gi"><use href="#unft"/></svg>展开工具</span>
              <span class="bb"><svg class="gi"><use href="#unf"/></svg>展开方向</span><span class="bpair"><span class="uvb on">U</span><span class="uvb">V</span></span>
              <span class="bb low"><svg class="gi"><use href="#strt"/></svg>拉直 UV</span><span class="bpair low"><span class="tin w60 sq">30.00</span><span class="uvb on rl">U</span><span class="uvb on rr">V</span></span>
              <span class="bb"><svg class="gi"><use href="#shell"/></svg>拉直壳</span>
            </div>

            <div class="sect m6"><i class="tri"></i>对齐和捕捉</div>
            <div class="sect m4"><i class="tri"></i>排列和布局</div>
          </div>
          <div class="vscroll tkvs"><i class="ar-up"></i><span class="spacer"></span><i class="vthumb big"></i><i class="ar-dn"></i></div>
        </div>
        <div class="dots-row tkdots"><i class="dots"></i></div>
        <div class="sect uvset"><i class="tri"></i>UV 集</div>
      </div>
    </div>
  </section>

  <section class="gozwin">
    <div class="wtitle gt"><svg class="wlogo"><use href="#mlogo"/></svg><span class="gt-dash">–</span><span class="spacer"></span><span class="wctl small"><span>▯</span><span>X</span></span></div>
    <div class="gozbody">GoZ update</div>
  </section>
</div>
</body>
</html>
```
FILE: styles.css
```css
* { box-sizing: border-box; }
html, body { margin: 0; padding: 0; background: #444; }
.sprite { position: absolute; width: 0; height: 0; overflow: hidden; }
.app {
  position: relative; width: 2560px; height: 1440px; overflow: hidden;
  display: flex; flex-direction: column; background: #444; color: #c4c4c4;
  font: 13px/1.2 "Open Sans", "Noto Sans CJK SC", sans-serif;
}
.spacer { flex: 1; }
svg { display: block; flex: none; }
i { display: block; flex: none; font-style: normal; }

/* title */
.titlebar { height: 23px; background: #000; color: #d8d8d8; display: flex; align-items: center; font-size: 11.800px; padding-right: 18px; flex: none; }
.title-logo { width: 20px; height: 21px; background: #e8e8e8; margin-right: 4px; padding: 2px; }
.winctl { display: flex; gap: 33px; color: #d8d8d8; font-size: 14px; }
.winctl span { width: 12px; text-align: center; }

/* menu */
.menubar { height: 25px; flex: none; display: flex; align-items: center; gap: 14.700px; padding-left: 8px; color: #bdbdbd; font-size: 12.250px; }
.ws-label { margin-right: -10.700px; }
.dd { background: #585858; display: flex; align-items: center; color: #c8c8c8; padding-left: 4px; position: relative; justify-content: space-between; padding-right: 4px; }
.ws-dd { width: 162px; height: 22px; margin-right: -12.700px; margin-top: 1px; }
.lock { width: 20px; height: 24px; padding: 2px; margin-right: 5px; }
.caret { width: 0; height: 0; border-left: 4.500px solid transparent; border-right: 4.500px solid transparent; border-top: 8px solid #d4d4d4; }
.caret.dim { border-top-color: #7c7c7c; border-left-width: 3.500px; border-right-width: 3.500px; border-top-width: 5px; }

/* toolbar */
.toolbar { height: 30px; flex: none; display: flex; align-items: center; padding: 0 4px 0 14px; border-bottom: 1px solid #3a3a3a; }
.mode-dd { width: 98px; height: 22px; }
.c { width: 23px; height: 22px; padding: 3px 3.500px; }
.c.on { background: #5285a6; }
.c.tiny { width: 16px; height: 18px; padding: 0; margin-right: 3px; }
.sep { width: 22px; height: 20px; background: linear-gradient(#8a8a8a, #8a8a8a) center / 1px 18px no-repeat; }
.sep.w28 { width: 28px; }
.sep.w17 { width: 17px; }
.cw { margin: 0 8.500px 0 8.500px; }
.tfield { background: #3a3a3a; height: 21px; display: flex; align-items: center; padding-left: 2px; font-size: 12.500px; color: #bdbdbd; }
.w95 { width: 96px; }
.login-dd { width: 120px; height: 22px; margin-left: 3px; justify-content: flex-start; padding-right: 4px; }
.login-dd .caret { margin-left: auto; }

/* shelf */
.shelftabs { height: 24px; flex: none; margin-top: 2px; display: flex; align-items: stretch; padding-left: 16px; }
.shelf-grip { width: 18px; background: #3a3a3a; text-align: center; color: #999; line-height: 24px; margin-right: 3px; }
.st { padding: 0 11.150px; background: #3a3a3a; margin-right: 1px; color: #868686; font-size: 12.500px; display: flex; align-items: center; white-space: nowrap; }
.st.active { background: #4a4a4a; color: #d8d8d8; }
.st-rest { flex: 1; background: #383838; margin: 3px 0; }
.shelf { height: 44px; flex: none; display: flex; align-items: center; padding-left: 16px; border-bottom: 2px solid #3c3c3c; }
.shelf-gear { width: 18px; text-align: center; color: #aaa; font-size: 11px; background: #3c3c3c; height: 42px; line-height: 42px; margin-top: 2px; }
.goz { margin-left: 9px; width: 32px; height: 32px; background: #f4f4f4; display: flex; flex-direction: column; align-items: center; color: #111; font-size: 9px; line-height: 10px; padding-top: 1px; margin-bottom: 2px; }
.goz b { font-family: "Liberation Sans", sans-serif; }
.goz-man { width: 28px; height: 20px; }

/* main */
.main { height: 1130px; margin-top: 2px; flex: none; display: flex; }
.toolbox { width: 45px; margin-right: 5px; flex: none; display: flex; flex-direction: column; align-items: center; padding: 13px 0 5px; }
.tb { width: 36px; height: 36px; padding: 2px; margin-bottom: 1px; }
.tb.on { background: #5285a6; }
.tb.gap-t { margin-top: 38px; }
.tb.tbo { margin-top: -4px; }
.tb-rule { width: 36px; height: 2px; background: #8a8a8a; margin: 4px 0 8px; }
.ly { width: 28px; height: 28px; margin-bottom: 9px; }
.bigm { width: 33px; height: 30px; }

.tabstrip { height: 20px; background: #3a3a3a; display: flex; flex: none; }
.tab { padding: 0 6px; background: #444; color: #dcdcdc; display: flex; align-items: center; font-size: 13px; white-space: nowrap; }
.pmenu { display: flex; align-items: center; flex: none; color: #bdbdbd; }

/* outliner */
.outliner { width: 282px; flex: none; display: flex; flex-direction: column; margin-right: 5px; }
.outliner .tab { width: 65px; }
.omenu { height: 25px; gap: 15px; padding-left: 7px; font-size: 12.200px; }
.osearch { height: 27px; display: flex; align-items: center; padding-left: 5px; gap: 3px; flex: none; }
.osearch-ic { width: 18px; height: 18px; margin-left: 3px; }
.osearch-in { width: 248px; height: 22px; background: #2d2d2d; color: #777; font-size: 12px; display: flex; align-items: center; justify-content: space-between; padding: 0 5px 0 3px; }
.olist { flex: 1; min-height: 0; display: flex; background: #3a3a3a; overflow: hidden; }
.orows { width: 265px; flex: none; height: 100%; overflow: hidden; }
.r { height: 20px; display: flex; align-items: center; white-space: nowrap; color: #bcbcbc; font: 11.500px/20px "DejaVu Sans", sans-serif; letter-spacing: .1px; }
.ic { width: 16px; height: 16px; margin-right: 3px; }
.ex { width: 9px; height: 9px; margin-right: 5px; }
.r0 { padding-left: 35px; }
.rx { padding-left: 21px; }
.rc, .rcx { padding-left: 47px; background: linear-gradient(#8d8d8d, #8d8d8d) 25px 0 / 1px 100% no-repeat, linear-gradient(#8d8d8d, #8d8d8d) 25px 10px / 10px 1px no-repeat, radial-gradient(circle 2.500px at 36px 10.500px, #a8a8a8 98%, transparent) no-repeat; }
.rcx { padding-left: 33px; background: linear-gradient(#8d8d8d, #8d8d8d) 25px 0 / 1px 100% no-repeat, linear-gradient(#8d8d8d, #8d8d8d) 25px 10px / 8px 1px no-repeat; }
.rc.last { background: linear-gradient(#8d8d8d, #8d8d8d) 25px 0 / 1px 10px no-repeat, linear-gradient(#8d8d8d, #8d8d8d) 25px 10px / 10px 1px no-repeat, radial-gradient(circle 2.500px at 36px 10.500px, #a8a8a8 98%, transparent) no-repeat; }
.r.sel { background-color: #46505c; }
.r.sel.rc.hl { color: #8fa3b5; }
.off { color: #6a6a6a; }
.off .ic { opacity: .9; }
.vscroll { width: 12px; flex: none; display: flex; flex-direction: column; align-items: center; padding: 2px 0; }
.ar-up { width: 0; height: 0; border: 5px solid transparent; border-top: 0; border-bottom: 5px solid #cfcfcf; margin-bottom: 3px; }
.ar-dn { width: 0; height: 0; border: 5px solid transparent; border-bottom: 0; border-top: 5px solid #cfcfcf; margin-top: 3px; }
.vthumb { width: 9px; height: 560px; background: #585858; border-radius: 4px; }
.vthumb.big { height: 325px; }
.hscroll { height: 11px; flex: none; display: flex; align-items: center; background: #3a3a3a; padding-left: 3px; gap: 3px; }
.ar-l { width: 0; height: 0; border: 5px solid transparent; border-left: 0; border-right: 5px solid #c4c4c4; }
.ar-r { width: 0; height: 0; border: 5px solid transparent; border-right: 0; border-left: 5px solid #c4c4c4; }
.hthumb { width: 238px; height: 10px; background: #585858; border-radius: 2px; }
.dots-row { height: 7px; flex: none; display: flex; justify-content: center; align-items: center; }
.dots { width: 88px; height: 2px; background: repeating-linear-gradient(90deg, #7a7a7a 0 1px, transparent 1px 3px); }

/* viewport */
.viewport { width: 1733px; flex: none; margin-top: 4px; margin-bottom: 2px; border: 1px solid #8d8d8d; border-left-color: #3a3a3a; display: flex; flex-direction: column; margin-right: 5px; background: #444; }
.vmenu { height: 23px; gap: 14.700px; padding: 0 0 2px 6px; font-size: 12.250px; }
.vtools { height: 19px; flex: none; display: flex; align-items: center; background: #444; padding-left: 7.500px; }
.v { width: 19px; height: 19px; padding: 1.500px; flex: none; }
.v.on { background: #5285a6; }
.vsep { width: 12px; height: 18px; background: linear-gradient(#8a8a8a, #8a8a8a) center / 1px 100% no-repeat; flex: none; }
.vsep.s10 { width: 10px; }
.vsep.s9 { width: 9px; }
.vsep.s13 { width: 13px; }
.vf { width: 38px; height: 19px; margin: 0 2px; background: #2d2d2d; font-size: 12px; color: #b0b0b0; display: flex; align-items: center; justify-content: center; flex: none; }
.aces-dd { width: 222px; height: 19px; margin-left: 2px; font-size: 12.500px; color: #a8a8a8; background: #505050; white-space: nowrap; }
.view3d { flex: 1; min-height: 0; background: #5e5e5e; position: relative; overflow: hidden; }
.stats { position: absolute; left: 15px; top: -4px; display: grid; grid-template-columns: 30px 76px 67px 69px; grid-auto-rows: 20px; align-items: center; font: bold 10.500px/20px "Liberation Sans", "Noto Sans CJK SC", sans-serif; color: #dedede; }
.stats span { text-align: right; }
.stats .sl { text-align: left; white-space: nowrap; }
.tube { position: absolute; left: 382px; top: 303px; width: 760px; height: 320px; }
.wire polyline, .wire-o polyline { fill: none; stroke: #5fcbf0; stroke-width: 1.200; vector-effect: non-scaling-stroke; }
.wire .thick { stroke-width: 2; }
.wire-o polyline { stroke: #c89c80; stroke-width: 1; }
.wire-g { stroke: #30e840; stroke-width: 3; vector-effect: non-scaling-stroke; }
.cursor { position: absolute; left: 931px; top: 441px; width: 52px; height: 22px; }
.axes { position: absolute; left: 7px; top: 1031px; width: 32px; height: 36px; }
.axt { font: bold 10px "Liberation Mono", monospace; fill: #2c2cc8; }
.iso { position: absolute; left: 822px; top: 1060px; font: bold 10.500px/14px "Liberation Sans", "Noto Sans CJK SC", sans-serif; color: #e4e4e4; white-space: nowrap; }

/* channel box */
.channel { width: 460px; flex: none; display: flex; flex-direction: column; padding-top: 4px; }
.cmenu { height: 21px; gap: 14.700px; padding-left: 12px; font-size: 12.250px; }
.ctabs { height: 18px; margin-top: 17px; display: flex; align-items: center; padding-left: 10px; flex: none; gap: 3px; }
.ctab-strip { width: 419px; height: 18px; background: #3a3a3a; display: flex; overflow: hidden; margin-right: 3px; }
.ct { padding: 4px 11px 0; color: #7f7f7f; font-size: 12.500px; margin-right: 1px; display: flex; align-items: center; white-space: nowrap; background: #3f3f3f; }
.ct.active { background: #444; color: #d4d4d4; }
.mini { border-width: 5px; }
.meshrow { display: flex; margin-top: 12px; flex: none; height: 65px; align-items: center; }
.mesh-l { margin-left: 119px; width: 41px; color: #a8a8a8; font-size: 12.500px; }
.mesh-in { width: 153px; height: 22px; background: #2d2d2d; color: #bcbcbc; font-size: 12.500px; display: flex; align-items: center; padding-left: 4px; }
.mesh-ar { display: flex; flex-direction: column; gap: 3px; margin-left: 12px; }
.ma { width: 16px; height: 20px; }
.mesh-b { margin-left: 14px; display: flex; flex-direction: column; gap: 2px; width: 74px; align-self: flex-start; }
.mb { height: 20px; background: #585858; color: #d4d4d4; display: flex; align-items: center; justify-content: center; font-size: 12.500px; flex: none; }
.dimb { background: #4a4a4a; color: #707070; }
.mbs { display: flex; gap: 3px; height: 22px; flex: none; }
.mbs .mb { height: 22px; flex: 1; }
.cbar { width: 441px; height: 24px; margin: 16px 0 0 14px; background: #505050; display: flex; align-items: center; color: #b4b4b4; font-size: 12.500px; padding-left: 7px; flex: none; }
.cbar.mt3 { margin-top: 3px; }
.tri { width: 0; height: 0; border-left: 7px solid #e0e0e0; border-top: 6px solid transparent; border-bottom: 6px solid transparent; margin-right: 14px; }
.tri.d { border-left: 6px solid transparent; border-right: 6px solid transparent; border-top: 7px solid #e0e0e0; border-bottom: 0; margin-right: 12px; margin-left: -4px; }
.cbottom { flex: 1; min-height: 0; background: #2c2c2c; margin: 6px 2px 6px 7px; }
.cbtns { height: 26px; flex: none; display: flex; gap: 3px; padding-left: 5px; margin-bottom: 3px; }
.cb { width: 149px; background: #4e4e4e; color: #b8b8b8; display: flex; align-items: center; justify-content: center; font-size: 12.500px; }
.cb.act { background: #626262; width: 153px; color: #d4d4d4; }
.fartabs { width: 25px; flex: none; display: flex; flex-direction: column; align-items: center; padding: 8px 0 0 3px; gap: 24px; background: #414141; }
.vt { writing-mode: vertical-rl; color: #737373; font-size: 12.500px; white-space: nowrap; }

/* time */
.timerow { height: 49px; flex: none; margin-top: 8px; display: flex; padding-left: 12px; }
.timeline { width: 2253px; flex: none; background: #2a2a2a; display: flex; padding-left: 13px; overflow: hidden; }
.curf { width: 18px; background: #555; color: #d8d8d8; font-size: 12px; display: flex; align-items: flex-end; justify-content: center; padding-bottom: 9px; flex: none; }
.fr { width: 37.150px; flex: none; color: #7f7f7f; font-size: 11.500px; line-height: 17px; padding-left: 6px; height: 17px; white-space: nowrap; }
.fr::after { content: ""; display: block; width: 1px; height: 28px; background: #949494; margin-left: -6px; }
.play-side { flex: 1; display: flex; align-items: flex-start; padding: 6px 0 0 7px; gap: 7px; }
.field { background: #2b2b2b; color: #b0b0b0; font-size: 12px; display: flex; align-items: center; padding-left: 4px; flex: none; }
.curbox { width: 88px; height: 21px; }
.playback { width: 182px; height: 20px; }

.rangerow { height: 33px; flex: none; margin-top: 8px; display: flex; align-items: center; padding-left: 14px; gap: 8px; }
.w88 { width: 88px; height: 27px; }
.w87 { width: 87px; height: 27px; }
.range { width: 1544px; height: 26px; background: #3f3f3f; margin-left: 7px; flex: none; margin-right: -1px; }
.range-in { width: 930px; height: 22px; margin-top: 2px; background: #5c5c5c; display: flex; align-items: center; padding: 0 3px; gap: 3px; color: #b0b0b0; font-size: 12px; }
.rh { width: 16px; height: 20px; background: #8e8e8e; border-radius: 3px; }
.rright { display: flex; align-items: center; margin-left: -8px; flex: none; }
.rsep { width: 1px; height: 22px; background: #8a8a8a; flex: none; }
.rsep.s6 { margin-left: 6px; }
.rsep.s13b { margin-left: 13px; }
.rsep.s10b { margin-left: 10px; }
.rkey { width: 16px; height: 20px; margin-left: 14px; }
.ca1 { margin-left: 15.500px; }
.ca2 { margin-left: 15.500px; }
.rfield { width: 96px; height: 26px; margin-left: 11.500px; padding-left: 5px; background: #444; border-top: 1px solid #3a3a3a; border-bottom: 2px solid #3a3a3a; display: flex; align-items: center; font-size: 12.500px; color: #bcbcbc; flex: none; }
.rfield.w98 { width: 98px; margin-left: 9.500px; }
.fps-dd { width: 103px; height: 22px; color: #9a9a9a; font-size: 13px; background: #535353; margin-left: 12px; }
.r-i { width: 18px; height: 18px; }
.loop { margin-left: 13px; }
.r-on { width: 22px; height: 26px; background: #5285a6; margin-left: 10px; }
.snd { margin-left: 12px; }
.clk { margin-left: 11px; }
.run { margin-left: 11px; }

.cmdrow { height: 27px; flex: none; margin-top: 7px; display: flex; align-items: center; position: relative; z-index: 2; }
.mel { width: 52px; padding-left: 22px; font-size: 12px; color: #cfcfcf; }
.cmd { background: #2b2b2b; height: 24px; }
.c1 { width: 720px; }
.c2 { flex: 1; margin-left: 8px; }
.helprow { height: 28px; flex: none; padding: 8px 0 0 24px; font-size: 12.500px; color: #a8a8a8; z-index: 3; }

.watermark { position: absolute; left: 12px; top: 1377px; display: flex; align-items: flex-end; gap: 14px; z-index: 5; pointer-events: none; }
.wm-logo { width: 50px; height: 48px; }
.wm-text { font: bold 40px/34px "DejaVu Sans", sans-serif; color: #a8a8a8; opacity: .55; letter-spacing: 1.500px; margin-bottom: 6px; }

/* uv window */
.uvwin { position: absolute; left: 1464px; top: 349px; width: 1096px; height: 774px; background: #444; display: flex; flex-direction: column; z-index: 6; }
.wtitle { height: 30px; background: #f6f6f6; display: flex; align-items: center; flex: none; padding: 0 10px 0 12px; border-radius: 3px 0 0 0; }
.wlogo { width: 10px; height: 14px; }
.wctl { display: flex; gap: 32px; color: #8a8a8a; font-size: 14px; }
.wctl span { width: 14px; text-align: center; }
.uvbody { flex: 1; min-height: 0; display: flex; }
.uvleft { width: 798px; flex: none; display: flex; flex-direction: column; }
.uvstrip { height: 19px; }
.uvtab { padding: 0 10px; font-size: 12.500px; }
.uvmenu { height: 26px; gap: 14.700px; padding-left: 10px; font-size: 12.250px; }
.uvmenu span { white-space: nowrap; }
.uvtools { height: 33px; flex: none; display: flex; align-items: center; padding-left: 9px; padding-right: 12px; }
.v.u { width: 22.500px; height: 24px; padding: 4px 3px; }
.ugap { width: 6px; }
.ucar { margin: 0 11.500px 0 6.500px; }
.notex { width: 60px; color: #6e6e6e; font-size: 12.500px; margin-right: 55px; white-space: nowrap; }
.uslider { width: 54px; height: 4px; background: #2f2f2f; display: flex; justify-content: center; align-items: center; margin: 0 4px 0 4px; border-radius: 2px; }
.uslider i { width: 7px; height: 14px; background: #cfcfcf; margin-left: 0; }
.usep { width: 9px; height: 18px; background: linear-gradient(#8a8a8a, #8a8a8a) center / 1px 100% no-repeat; }
.uvview { flex: 1; min-height: 0; background: #5e5e5e; margin: 0 0 3px 3px; position: relative; display: flex; flex-direction: column; justify-content: flex-end; overflow: hidden; }
.shell { position: absolute; left: -7px; top: 43px; width: 560px; height: 620px; }
.uvgrid { stroke: #626262; stroke-width: 1; vector-effect: non-scaling-stroke; }
.ringl polyline { fill: none; stroke: #40d8c0; stroke-width: 1; vector-effect: non-scaling-stroke; }
.shell-o { fill: none; stroke: #dcdcdc; stroke-width: 1.400; vector-effect: non-scaling-stroke; }
.uvstatus { display: flex; justify-content: space-between; padding: 0 7px 4px 5px; font: bold 10.500px/14px "Liberation Sans", "Noto Sans CJK SC", sans-serif; color: #d4d4d4; position: relative; letter-spacing: .3px; }
.stat-r { letter-spacing: .1px; }

.tk { flex: 1; display: flex; flex-direction: column; font-size: 12px; }
.tkstrip { padding-left: 5px; padding-top: 3px; }
.tkstrip .uvtab { padding: 0 9px; }
.tkmenu { height: 26px; gap: 15px; padding-left: 13px; font-size: 12px; }
.tkbody { height: 663px; flex: none; display: flex; }
.tkscroll { width: 287px; flex: none; display: flex; flex-direction: column; }
.tkvs { width: 10px; padding: 4px 0 0; }
.tr { height: 22px; display: flex; align-items: center; flex: none; color: #c4c4c4; }
.m4 { margin-top: 4px; } .m6 { margin-top: 6px; } .m7 { margin-top: 7px; } .m8 { margin-top: 8px; } .m9 { margin-top: 9px; } .m10 { margin-top: 10px; } .m11 { margin-top: 11px; } .m13 { margin-top: 13px; } .m19 { margin-top: 19px; } .m22 { margin-top: 22px; }
.snap { padding-left: 86px; }
.tl4 { width: 52px; font-size: 12.750px; white-space: nowrap; flex: none; }
.tca { margin: 0 9px 0 10px; }
.sbox { width: 58px; height: 20px; background: #3e3e3e; display: flex; align-items: center; padding-left: 6px; font-size: 12.500px; color: #d0d0d0; flex: none; }
.sval { width: 40px; height: 20px; background: #3c3c3c; margin-left: 6px; color: #555; font-size: 12px; overflow: hidden; display: flex; align-items: center; padding-left: 4px; flex: none; }
.chkrow { padding-left: 85px; gap: 5px; }
.cbx { width: 12px; height: 12px; background: #000; }
.cbx::after { content: ""; display: block; width: 7px; height: 4px; border-left: 2px solid #fff; border-bottom: 2px solid #fff; transform: rotate(-45deg); margin: 2px 0 0 2px; }
.grp { padding-left: 84px; height: 23px; }
.gb { background: #585858; height: 100%; display: flex; align-items: center; color: #bcbcbc; font-size: 12.500px; gap: 3px; padding-left: 1px; }
.w85 { width: 84px; }
.w114 { width: 114px; }
.gi { width: 18px; height: 18px; margin-right: 2px; }
.uvb { width: 30px; height: 100%; background: #585858; color: #c8c8c8; display: flex; align-items: center; justify-content: center; font-size: 12.500px; flex: none; margin-right: 1px; }
.uvb.on { background: #5285a6; color: #c6e0f0; }
.rl { border-radius: 3px 0 0 3px; }
.rr { border-radius: 0 3px 3px 0; }
.sect { height: 22px; flex: none; display: flex; align-items: center; margin-left: 10px; margin-right: 4px; background: #404040; padding-left: 9px; color: #a8a8a8; font-size: 12.500px; }
.tsect { height: 24px; margin-left: 18px; margin-right: 6px; color: #d0d0d0; padding-left: 11px; }
.lab { padding-left: 38px; height: 22px; }
.tlab { width: 46px; flex: none; }
.lca { margin-left: 5px; margin-right: 5px; }
.tin { width: 58px; height: 20px; background: #2b2b2b; border-radius: 3px; color: #cfcfcf; display: flex; align-items: center; padding-left: 5px; font-size: 12.500px; flex: none; }
.tin.sq { border-radius: 0; height: 22px; }
.w60 { width: 60px; }
.ri { width: 18px; height: 18px; }
.gl23 { margin-left: 14px; }
.gl12 { margin-left: 11px; }
.gl10 { margin-left: 10px; }
.gl3 { margin-left: 3px; }
.texel { display: flex; margin-top: 18px; flex: none; height: 54px; }
.tex-l { width: 84px; text-align: center; line-height: 16.500px; font-size: 12px; padding: 5px 0 0 20px; white-space: nowrap; color: #bcbcbc; flex: none; }
.tex-r { display: flex; flex-direction: column; }
.tex-row { height: 22px; display: flex; align-items: center; flex: none; }
.tex-row.m10 { margin-top: 10px; padding-left: 2px; }
.tb-btn { background: #585858; height: 22px; display: flex; align-items: center; justify-content: center; color: #bcbcbc; flex: none; }
.w46 { width: 46px; }
.tca2 { margin: 0 8px; }
.mapin { width: 118px; height: 21px; background: #2b2b2b; margin-left: 9px; display: flex; align-items: center; padding-left: 5px; color: #cfcfcf; font-size: 12.500px; }
.bgrid { display: grid; grid-template-columns: 123px 122px; grid-template-rows: 22px 22px 22px 26px 22px; row-gap: 1px; margin: 8px 0 0 13px; flex: none; }
.bb { background: #585858; display: flex; align-items: center; color: #c4c4c4; font-size: 12.500px; padding-left: 2px; gap: 3px; border-right: 1px solid #444; }
.bpair { display: flex; }
.low { height: 22px; align-self: end; }
.bpair .tin { margin-right: 2px; }
.tkdots { height: 8px; }
.uvset { margin: 0 4px 0 10px; background: #444; color: #b4b4b4; font-size: 12.500px; padding-left: 7px; }

/* goz */
.gozwin { position: absolute; left: 2427px; top: 1381px; width: 133px; height: 59px; background: #1f1f1f; display: flex; flex-direction: column; z-index: 7; border-radius: 3px 0 0 0; }
.gt { padding: 0 10px 0 9px; }
.gt-dash { color: #888; margin-left: 1px; }
.wctl.small { gap: 18px; }
.gozbody { flex: 1; display: flex; align-items: center; justify-content: center; color: #d4d4d4; font-size: 13px; }
```
